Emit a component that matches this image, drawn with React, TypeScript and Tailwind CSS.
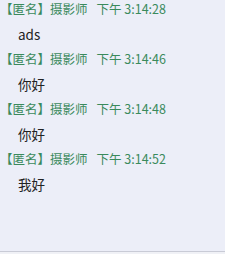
import React from "react";

const msgs = [
  { time: "下午 3:14:28", text: "ads" },
  { time: "下午 3:14:46", text: "你好" },
  { time: "下午 3:14:48", text: "你好" },
  { time: "下午 3:14:52", text: "我好" },
];

export default function App() {
  return (
    <div
      className="w-[250px] h-[254px] bg-white flex"
      style={{ fontFamily: '"Noto Sans CJK SC", "Noto Sans", sans-serif' }}
    >
      <div className="w-[225px] h-[254px] flex flex-col">
        <div className="flex-1 bg-[#eceef8] flex flex-col">
          {msgs.map((m, i) => (
            <div key={i} className="h-[50px] flex flex-col">
              <div className="h-[17px] flex items-center text-[12.5px] leading-[17px] text-[#3a8a5c] whitespace-nowrap">
                <span>【匿名】</span>
                <span>摄影师</span>
                <span className="ml-[9px]">{m.time}</span>
              </div>
              <div className="mt-[9px] pl-[18px] h-[17px] flex items-center text-[13.5px] leading-[17px] text-[#222]">
                {m.text}
              </div>
            </div>
          ))}
        </div>
        <div className="h-[1px] bg-[#c9cbd6]" />
        <div className="h-[2px] bg-[#f0f1f6]" />
      </div>
    </div>
  );
}
